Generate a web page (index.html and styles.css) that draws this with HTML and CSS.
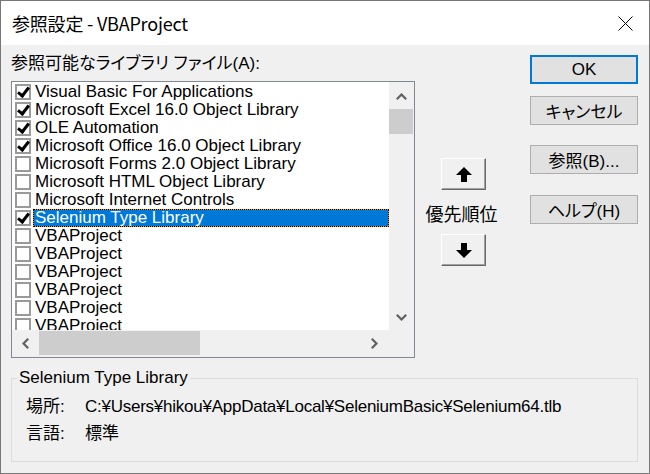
FILE: index.html
```html
<!DOCTYPE html>
<html lang="ja">
<head>
    <meta charset="UTF-8">
    <title>参照設定 - VBAProject</title>
    <link rel="stylesheet" href="styles.css">
</head>
<body>
    <div class="window">
        <div class="titlebar">
            <span class="title">参照設定 - VBAProject</span>
            <svg class="close" width="15" height="15" viewBox="0 0 15 15">
                <path d="M0.5 0.5 L14.5 14.5 M14.5 0.5 L0.5 14.5" stroke="#000" stroke-width="1" fill="none"/>
            </svg>
        </div>

        <div class="content">
            <div class="main">
                <div class="libs">
                    <div class="libs-label">参照可能なライブラリ ファイル(A):</div>
                    <div class="listbox">
                        <div class="list">
                            <div class="row"><span class="check on"></span><span class="name">Visual Basic For Applications</span></div>
                            <div class="row"><span class="check on"></span><span class="name">Microsoft Excel 16.0 Object Library</span></div>
                            <div class="row"><span class="check on"></span><span class="name">OLE Automation</span></div>
                            <div class="row"><span class="check on"></span><span class="name">Microsoft Office 16.0 Object Library</span></div>
                            <div class="row"><span class="check"></span><span class="name">Microsoft Forms 2.0 Object Library</span></div>
                            <div class="row"><span class="check"></span><span class="name">Microsoft HTML Object Library</span></div>
                            <div class="row"><span class="check"></span><span class="name">Microsoft Internet Controls</span></div>
                            <div class="row selected"><span class="check on"></span><span class="name">Selenium Type Library</span></div>
                            <div class="row"><span class="check"></span><span class="name">VBAProject</span></div>
                            <div class="row"><span class="check"></span><span class="name">VBAProject</span></div>
                            <div class="row"><span class="check"></span><span class="name">VBAProject</span></div>
                            <div class="row"><span class="check"></span><span class="name">VBAProject</span></div>
                            <div class="row"><span class="check"></span><span class="name">VBAProject</span></div>
                            <div class="row"><span class="check"></span><span class="name">VBAProject</span></div>
                        </div>
                        <div class="vscroll">
                            <div class="sb-btn sb-up">
                                <svg width="11" height="7" viewBox="0 0 11 7"><polyline points="0.8,6.2 5.5,1.5 10.2,6.2" fill="none" stroke="#606060" stroke-width="2.2"/></svg>
                            </div>
                            <div class="vthumb"></div>
                            <div class="sb-fill"></div>
                            <div class="sb-btn sb-down">
                                <svg width="11" height="7" viewBox="0 0 11 7"><polyline points="0.8,0.8 5.5,5.5 10.2,0.8" fill="none" stroke="#606060" stroke-width="2.2"/></svg>
                            </div>
                        </div>
                        <div class="hscroll">
                            <div class="sb-btn sb-left">
                                <svg width="7" height="11" viewBox="0 0 7 11"><polyline points="6.2,0.8 1.5,5.5 6.2,10.2" fill="none" stroke="#606060" stroke-width="2.2"/></svg>
                            </div>
                            <div class="hthumb"></div>
                            <div class="sb-fill"></div>
                            <div class="sb-btn sb-right">
                                <svg width="7" height="11" viewBox="0 0 7 11"><polyline points="0.8,0.8 5.5,5.5 0.8,10.2" fill="none" stroke="#606060" stroke-width="2.2"/></svg>
                            </div>
                        </div>
                        <div class="corner"></div>
                    </div>
                </div>

                <div class="priority">
                    <button class="move-btn up">
                        <svg width="16" height="15" viewBox="0 0 16 15"><polygon points="8,0 16,8 11,8 11,15 5,15 5,8 0,8" fill="#000"/></svg>
                    </button>
                    <div class="priority-label">優先順位</div>
                    <button class="move-btn down">
                        <svg width="16" height="15" viewBox="0 0 16 15"><polygon points="5,0 11,0 11,7 16,7 8,15 0,7 5,7" fill="#000"/></svg>
                    </button>
                </div>

                <div class="buttons">
                    <button class="btn default">OK</button>
                    <button class="btn cancel">キャンセル</button>
                    <button class="btn browse">参照(B)...</button>
                    <button class="btn help">ヘルプ(H)</button>
                </div>
            </div>

            <fieldset class="info">
                <legend>Selenium Type Library</legend>
                <div class="info-grid">
                    <span class="info-key">場所:</span>
                    <span class="info-val path">C:¥Users¥hikou¥AppData¥Local¥SeleniumBasic¥Selenium64.tlb</span>
                    <span class="info-key">言語:</span>
                    <span class="info-val">標準</span>
                </div>
            </fieldset>
        </div>
    </div>
</body>
</html>
```

FILE: styles.css
```css
body {
    margin: 0;
    padding: 0;
    background-color: #f0f0f0;
    overflow: hidden;
    font-family: "Liberation Sans", "Noto Sans CJK JP", sans-serif;
    font-size: 17px;
    color: #000;
}

.window {
    width: 650px;
    height: 474px;
    box-sizing: border-box;
    border: 1px solid #777777;
    background-color: #f0f0f0;
}

/* title bar */
.titlebar {
    height: 44px;
    background-color: #ffffff;
    display: flex;
    align-items: center;
    justify-content: space-between;
    padding: 0 16px 0 11px;
}

.title {
    font-family: "Noto Sans CJK JP", sans-serif;
    font-size: 18px;
    letter-spacing: -0.2px;
    color: #000;
}

.close {
    display: block;
    margin-top: 1px;
}

.content {
    padding: 0 11px 0 10px;
}

.main {
    display: flex;
    padding-top: 10px;
}

/* library list */
.libs {
    width: 404px;
}

.libs-label {
    font-feature-settings: "palt";
    line-height: 18px;
    margin-bottom: 8px;
    white-space: nowrap;
}

.listbox {
    width: 404px;
    height: 277px;
    box-sizing: border-box;
    border: 1px solid #828790;
    display: grid;
    grid-template-columns: 377px 25px;
    grid-template-rows: 248px 27px;
    background-color: #ffffff;
}

.list {
    overflow: hidden;
    padding-top: 1px;
    background-color: #ffffff;
}

.row {
    display: flex;
    align-items: center;
    height: 18px;
    padding-left: 3px;
    white-space: nowrap;
}

.check {
    width: 16px;
    height: 16px;
    box-sizing: border-box;
    border: 2px solid #9a9a9a;
    background-color: #ffffff;
    flex-shrink: 0;
    position: relative;
}

.check.on::after {
    content: "";
    position: absolute;
    left: 3px;
    top: -1px;
    width: 4px;
    height: 9px;
    border-right: 3px solid #000;
    border-bottom: 3px solid #000;
    transform: rotate(38deg);
}

.name {
    margin-left: 2px;
    padding-left: 2px;
    line-height: 18px;
    height: 18px;
    flex: 1;
}

.row.selected .name {
    background-color: #0078d7;
    color: #ffffff;
    box-sizing: border-box;
    box-shadow: inset 0 0 0 1px #ff8728;
    outline: 1px dotted #000;
    outline-offset: -1px;
}

/* scrollbars */
.vscroll {
    background-color: #f0f0f0;
    display: flex;
    flex-direction: column;
}

.sb-btn {
    display: flex;
    align-items: center;
    justify-content: center;
}

.sb-up {
    height: 27px;
    padding-top: 2px;
    box-sizing: border-box;
}

.vthumb {
    height: 25px;
    width: 24px;
    background-color: #cdcdcd;
}

.sb-fill {
    flex: 1;
}

.sb-down {
    height: 26px;
}

.hscroll {
    background-color: #f0f0f0;
    display: flex;
}

.sb-left {
    width: 27px;
}

.hthumb {
    width: 161px;
    height: 24px;
    margin-top: 1px;
    background-color: #cdcdcd;
}

.sb-right {
    width: 30px;
}

.corner {
    background-color: #f0f0f0;
}

/* priority buttons */
.priority {
    width: 71px;
    margin-left: 11px;
    display: flex;
    flex-direction: column;
    align-items: center;
    padding-top: 103px;
}

.move-btn {
    align-self: flex-start;
    margin-left: 15px;
    width: 45px;
    height: 32px;
    padding: 0;
    background-color: #f0f0f0;
    border: 1px solid;
    border-color: #ffffff #696969 #696969 #ffffff;
    box-shadow: inset -1px -1px 0 #a0a0a0;
    display: flex;
    align-items: center;
    justify-content: center;
}

.move-btn svg {
    display: block;
}

.priority-label {
    font-family: "Noto Sans CJK JP", sans-serif;
    font-size: 18px;
    line-height: 18px;
    margin: 14px 0 12px;
    white-space: nowrap;
}

/* dialog buttons */
.buttons {
    margin-left: 33px;
    width: 108px;
    display: flex;
    flex-direction: column;
}

.btn {
    width: 108px;
    height: 29px;
    padding: 0;
    background-color: #e1e1e1;
    border: 1px solid #adadad;
    font-family: "Liberation Sans", "Noto Sans CJK JP", sans-serif;
    font-feature-settings: "palt";
    font-size: 17px;
    color: #000;
}

.btn.default {
    border: 2px solid #0078d7;
}

.btn.cancel {
    margin-top: 12px;
}

.btn.browse {
    margin-top: 20px;
}

.btn.help {
    margin-top: 21px;
}

/* info group */
.info {
    margin: 11px 0 0 0;
    border: 1px solid #dcdcdc;
    padding: 0 0 0 5px;
    min-width: 0;
}

.info legend {
    padding: 0 2px;
    line-height: 18px;
}

.info-grid {
    display: grid;
    grid-template-columns: 59px auto;
    row-gap: 9px;
    margin: 11px 0 18px 9px;
    line-height: 18px;
}

.info-key {
    white-space: nowrap;
}

.path {
    letter-spacing: -0.25px;
    white-space: nowrap;
}
```
